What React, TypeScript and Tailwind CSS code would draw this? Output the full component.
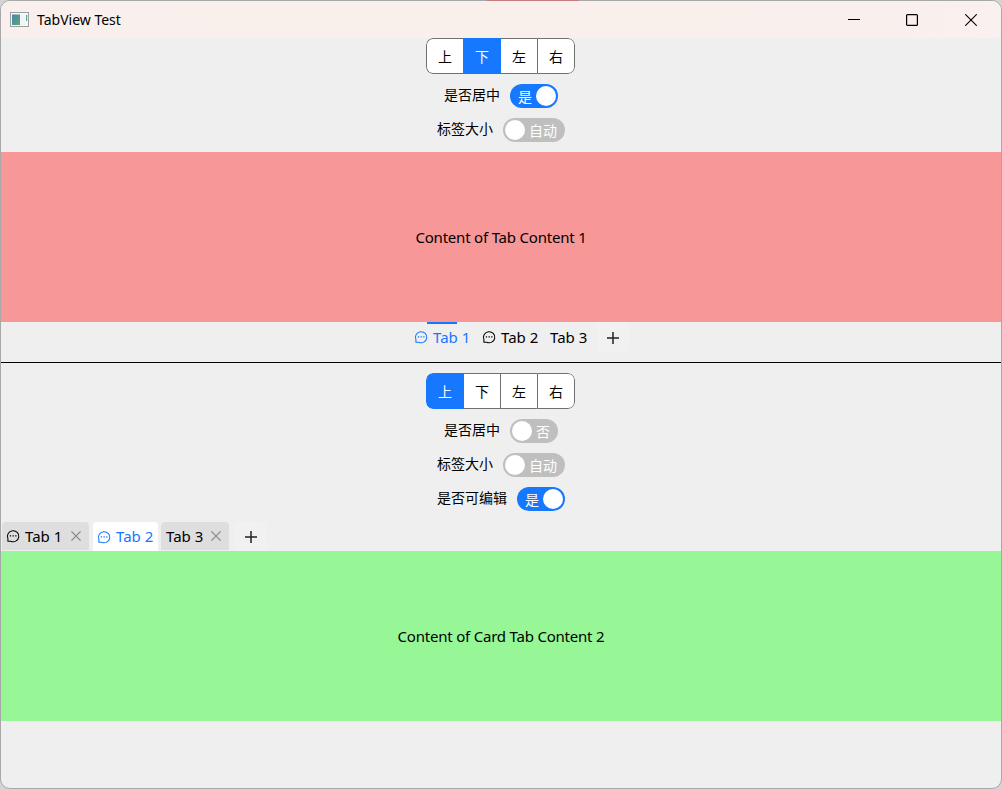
import React from 'react';

const BLUE = 'text-[#1677ff]';

function CommentIcon() {
  return (
    <svg width="14" height="14" viewBox="0 0 14 14" fill="none" stroke="currentColor" strokeWidth="1.05" className="shrink-0">
      <path d="M1.9 12.2V9.4A5.7 5.5 0 1 1 4.7 12.2Z" strokeLinejoin="round" />
      <path d="M3.8 6.9h1.3M6.5 6.9h1.3M9.2 6.9h1.3" strokeWidth="1.3" />
    </svg>
  );
}

function PlusIcon() {
  return (
    <svg width="12" height="12" viewBox="0 0 12 12" stroke="#222" strokeWidth="1.5">
      <path d="M6 0v12M0 6h12" />
    </svg>
  );
}

function CloseIcon() {
  return (
    <svg width="10" height="10" viewBox="0 0 10 10" stroke="#858585" strokeWidth="1.2" className="shrink-0">
      <path d="M.4.4l9.2 9.2M9.6.4L.4 9.6" />
    </svg>
  );
}

function Segmented({ active }: { active: number }) {
  return (
    <div className="mr-px flex h-9 w-[149px] shrink-0 overflow-hidden rounded-[7px] bg-white text-[14px]">
      {['上', '下', '左', '右'].map((label, i) => {
        const afterActive = i - 1 === active;
        const edge =
          i === 0
            ? 'w-[37px] rounded-l-[7px] border-l'
            : i === 3
              ? 'w-[38px] rounded-r-[7px] border-r'
              : afterActive
                ? 'w-[36px]'
                : 'w-[37px]';
        const divider = i > 0 && !afterActive ? 'border-l' : '';
        return i === active ? (
          <div
            key={label}
            className={`flex w-[38px] shrink-0 items-center justify-center bg-[#1677ff] pt-px text-white ${i === 0 ? 'rounded-l-[7px]' : ''}`}
          >
            {label}
          </div>
        ) : (
          <div
            key={label}
            className={`flex shrink-0 items-center justify-center border-y border-[#707070] pt-px ${edge} ${divider}`}
          >
            {label}
          </div>
        );
      })}
    </div>
  );
}

function Toggle({ on, text, wide }: { on?: boolean; text: string; wide?: boolean }) {
  return (
    <div
      className={`flex h-6 shrink-0 items-center justify-between rounded-full text-[14px] leading-5 text-white ${wide ? 'w-[62px]' : 'w-12'} ${on ? 'flex-row-reverse bg-[#1677ff] pr-0.5 pl-2' : 'bg-[#bfbfbf] pr-2 pl-0.5'}`}
    >
      <span className="size-5 rounded-full bg-white" />
      <span className="pt-0.5">{text}</span>
    </div>
  );
}

function Setting({ label, ...rest }: { label: string; on?: boolean; text: string; wide?: boolean }) {
  return (
    <div className="flex h-6 items-center gap-2.5">
      <span className="pb-0.5 text-[14px] leading-5">{label}</span>
      <Toggle {...rest} />
    </div>
  );
}

function TitleBar() {
  return (
    <header className="relative flex h-[37px] shrink-0 items-center bg-gradient-to-r from-[#f9f0ee] via-[#f9f0eb] to-[#f9f0ef] pl-[9px]">
      <svg width="19" height="15" viewBox="0 0 19 15">
        <defs>
          <linearGradient id="pane" x1="0" y1="0" x2="1" y2="1">
            <stop stopColor="#4b83ae" />
            <stop offset="1" stopColor="#5aa974" />
          </linearGradient>
        </defs>
        <rect x=".5" y=".5" width="18" height="14" fill="#f5f7f8" stroke="#9a9fa3" />
        <rect x="2" y="2.5" width="8" height="10.5" fill="url(#pane)" />
        <path d="M11.5 3v10M14 3v10" stroke="#eef1f2" />
        <rect x="16" y="3" width="1.2" height="6" fill="#62a891" />
      </svg>
      <h1 className="ml-2 flex-1 text-[14px]">TabView Test</h1>
      <div className="flex items-center pr-[24px]">
        <svg width="12" height="12" viewBox="0 0 12 12" stroke="black"><path d="M0 5.5h12" /></svg>
        <svg width="12" height="12" viewBox="0 0 12 12" stroke="black" fill="none" strokeWidth="1.2" className="ml-[46px]"><rect x=".6" y=".6" width="10.8" height="10.8" rx="1" /></svg>
        <svg width="12" height="12" viewBox="0 0 12 12" stroke="black" strokeWidth="1.1" className="ml-[47px]"><path d="M.2.2l11.6 11.6M11.8.2L.2 11.8" /></svg>
      </div>
    </header>
  );
}

export default function App() {
  return (
    <div className="relative h-[789px] w-[1002px] overflow-hidden bg-[#d4d4d4] font-['Noto_Sans','Noto_Sans_CJK_SC',sans-serif] text-black">
      <div className="flex h-full flex-col overflow-hidden rounded-[10px] border border-[#a8a8a8] bg-[#efefef]">
        <TitleBar />
        <section className="flex h-[114px] shrink-0 flex-col items-center gap-2.5">
          <Segmented active={1} />
          <Setting label="是否居中" on text="是" />
          <Setting label="标签大小" text="自动" wide />
        </section>
        <div className="flex h-[170px] shrink-0 items-center justify-center bg-[#f79797] text-[15px] tracking-[-0.2px]">
          <span>Content of Tab Content 1</span>
        </div>
        <div className="flex h-10 shrink-0 items-start pl-[413px] text-[15px]">
          <div className={`relative flex h-[30px] w-[68px] items-center gap-[5px] ${BLUE}`}>
            <span className="absolute top-0 left-[13px] h-0.5 w-[30px] bg-[#1677ff]" />
            <CommentIcon />
            <span>Tab 1</span>
          </div>
          <div className="flex h-[30px] w-[68px] items-center gap-[5px]">
            <CommentIcon />
            <span>Tab 2</span>
          </div>
          <div className="flex h-[30px] w-[47px] items-center">Tab 3</div>
          <div className="flex h-[30px] w-8 items-center justify-center rounded bg-[#f1f1f1] pt-0.5">
            <PlusIcon />
          </div>
        </div>
        <div className="h-px shrink-0 bg-black" />
        <section className="flex h-[158px] shrink-0 flex-col items-center gap-2.5 pt-2.5">
          <Segmented active={0} />
          <Setting label="是否居中" text="否" />
          <Setting label="标签大小" text="自动" wide />
          <Setting label="是否可编辑" on text="是" />
        </section>
        <div className="flex h-[30px] shrink-0 items-start pt-px pl-px text-[15px]">
          <div className="flex h-7 w-[87px] items-center gap-[5px] rounded-t bg-[#dedede] pl-1">
            <CommentIcon />
            <span className="w-[41px]">Tab 1</span>
            <CloseIcon />
          </div>
          <div className={`ml-1 flex h-[29px] w-[65px] items-center gap-[5px] rounded-t bg-white pl-1 ${BLUE}`}>
            <CommentIcon />
            <span>Tab 2</span>
          </div>
          <div className="ml-[3px] flex h-7 w-[68px] items-center rounded-t bg-[#dedede] pl-[5px]">
            <span className="w-[45px]">Tab 3</span>
            <CloseIcon />
          </div>
          <div className="ml-1.5 flex h-[30px] w-8 items-center justify-center rounded bg-[#f1f1f1]">
            <PlusIcon />
          </div>
        </div>
        <div className="flex h-[170px] shrink-0 items-center justify-center bg-[#97f797] text-[15px] tracking-[-0.21px]">
          <span>Content of Card Tab Content 2</span>
        </div>
      </div>
      <span className="absolute top-0 left-[487px] h-px w-[92px] bg-[#c47c7c]" />
    </div>
  );
}
